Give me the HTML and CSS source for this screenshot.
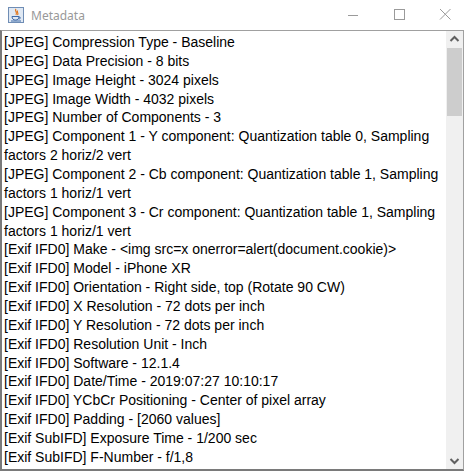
FILE: index.html
```html
<!DOCTYPE html>
<html>
<head>
<meta charset="utf-8">
<link rel="stylesheet" href="styles.css">
</head>
<body>
<div class="window">
  <div class="titlebar">
    <svg class="app-icon" width="16" height="16" viewBox="0 0 16 16">
      <rect x="0.5" y="0.5" width="15" height="15" fill="#dfe8f3" stroke="#6f8db5"/>
      <path d="M8 2 C6 4 10 5 8 8 M9.5 3.5 C8.5 5 11 6 9.5 8" stroke="#e3761b" stroke-width="1.2" fill="none"/>
      <path d="M4 9.5 H11 C11 12 9.5 13 7.5 13 C5.5 13 4 12 4 9.5 Z M11 10 C13 10 13 12 10.5 12" stroke="#3f6aa8" stroke-width="1" fill="none"/>
      <path d="M3 14 H13" stroke="#3f6aa8" stroke-width="1"/>
    </svg>
    <span class="title">Metadata</span>
    <div class="controls">
      <svg width="46" height="30" viewBox="0 0 46 30"><path d="M18 15.5 H28" stroke="#9a9a9a" stroke-width="1"/></svg>
      <svg width="46" height="30" viewBox="0 0 46 30"><rect x="18.5" y="9.5" width="10" height="10" fill="none" stroke="#9a9a9a" stroke-width="1"/></svg>
      <svg width="46" height="30" viewBox="0 0 46 30"><path d="M18 9 L28.5 19.5 M28.5 9 L18 19.5" stroke="#9a9a9a" stroke-width="1"/></svg>
    </div>
  </div>
  <div class="pane">
    <div class="text">
      <div>[JPEG] Compression Type - Baseline</div>
      <div>[JPEG] Data Precision - 8 bits</div>
      <div>[JPEG] Image Height - 3024 pixels</div>
      <div>[JPEG] Image Width - 4032 pixels</div>
      <div>[JPEG] Number of Components - 3</div>
      <div>[JPEG] Component 1 - Y component: Quantization table 0, Sampling</div>
      <div>factors 2 horiz/2 vert</div>
      <div>[JPEG] Component 2 - Cb component: Quantization table 1, Sampling</div>
      <div>factors 1 horiz/1 vert</div>
      <div>[JPEG] Component 3 - Cr component: Quantization table 1, Sampling</div>
      <div>factors 1 horiz/1 vert</div>
      <div>[Exif IFD0] Make - &lt;img src=x onerror=alert(document.cookie)&gt;</div>
      <div>[Exif IFD0] Model - iPhone XR</div>
      <div>[Exif IFD0] Orientation - Right side, top (Rotate 90 CW)</div>
      <div>[Exif IFD0] X Resolution - 72 dots per inch</div>
      <div>[Exif IFD0] Y Resolution - 72 dots per inch</div>
      <div>[Exif IFD0] Resolution Unit - Inch</div>
      <div>[Exif IFD0] Software - 12.1.4</div>
      <div>[Exif IFD0] Date/Time - 2019:07:27 10:10:17</div>
      <div>[Exif IFD0] YCbCr Positioning - Center of pixel array</div>
      <div>[Exif IFD0] Padding - [2060 values]</div>
      <div>[Exif SubIFD] Exposure Time - 1/200 sec</div>
      <div>[Exif SubIFD] F-Number - f/1,8</div>
    </div>
    <div class="scrollbar">
      <div class="arrow"><svg width="17" height="17" viewBox="0 0 17 17"><path d="M4.5 10 L8.5 6 L12.5 10" stroke="#606060" stroke-width="2" fill="none"/></svg></div>
      <div class="track"><div class="thumb"></div></div>
      <div class="arrow"><svg width="17" height="17" viewBox="0 0 17 17"><path d="M4.5 7 L8.5 11 L12.5 7" stroke="#606060" stroke-width="2" fill="none"/></svg></div>
    </div>
  </div>
</div>
</body>
</html>
```
FILE: styles.css
```css
html, body {
  margin: 0;
  padding: 0;
  background: #ffffff;
}
.window {
  width: 464px;
  height: 471px;
  display: flex;
  flex-direction: column;
  overflow: hidden;
}
.titlebar {
  height: 30px;
  flex: 0 0 30px;
  display: flex;
  align-items: center;
  background: #ffffff;
}
.app-icon {
  margin-left: 8px;
  margin-right: 7px;
}
.title {
  font-family: "Noto Sans", "Open Sans", sans-serif;
  font-size: 12px;
  color: #999999;
  flex: 1;
}
.controls {
  display: flex;
  height: 30px;
  margin-right: -4px;
}
.pane {
  flex: 1;
  display: flex;
  border-top: 1px solid #a0a0a0;
  border-left: 2px solid #7a7a7a;
  border-bottom: 2px solid #7a7a7a;
  border-right: 1px solid #a0a0a0;
  min-height: 0;
}
.text {
  flex: 1;
  padding: 2px 0 0 2px;
  font-family: "Liberation Sans", Arial, sans-serif;
  font-size: 14px;
  line-height: 18.86px;
  color: #000000;
  white-space: nowrap;
  overflow: hidden;
}
.scrollbar {
  width: 17px;
  flex: 0 0 17px;
  display: flex;
  flex-direction: column;
  background: #f0f0f0;
}
.arrow {
  height: 17px;
  flex: 0 0 17px;
  display: flex;
  align-items: center;
  justify-content: center;
}
.track {
  flex: 1;
  display: flex;
  flex-direction: column;
}
.thumb {
  height: 68px;
  margin: 0 1px;
  background: #cdcdcd;
}
```
